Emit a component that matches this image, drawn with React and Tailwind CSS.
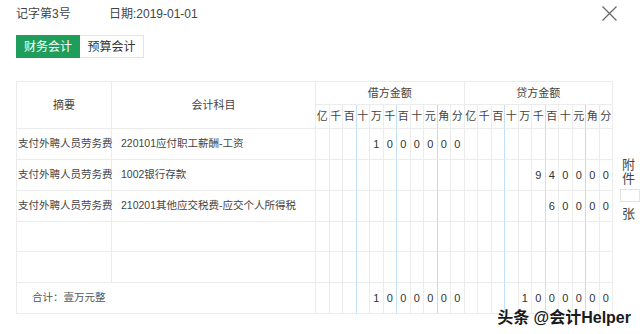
import React from 'react';

const units = ['亿', '千', '百', '十', '万', '千', '百', '十', '元', '角', '分'];

const rows = [
  { memo: '支付外聘人员劳务费', account: '220101应付职工薪酬-工资', debit: '1000000', credit: '' },
  { memo: '支付外聘人员劳务费', account: '1002银行存款', debit: '', credit: '940000' },
  { memo: '支付外聘人员劳务费', account: '210201其他应交税费-应交个人所得税', debit: '', credit: '60000' },
  { memo: '', account: '', debit: '', credit: '' },
  { memo: '', account: '', debit: '', credit: '' },
];

// 金额按位拆开，右对齐到“分”
const toDigits = (s) => {
  const arr = Array(11).fill('');
  s.split('').forEach((c, k) => {
    arr[11 - s.length + k] = c;
  });
  return arr;
};

const lineColor = (i) => {
  if (i === 2 || i === 5) return 'border-r-[#c2e1f6]';
  if (i === 8) return 'border-r-[#f6c9c9]';
  return 'border-r-[#ececec]';
};

const AmountCells = ({ value }) =>
  toDigits(value).map((d, i) => (
    <div
      key={i}
      className={`border-r border-b border-b-[#ececec] ${lineColor(i)} flex items-center justify-center text-[11px] text-[#333]`}
    >
      {d}
    </div>
  ));

const App = () => {
  return (
    <div
      className="relative w-[640px] h-[334px] bg-white overflow-hidden text-[#333]"
      style={{ fontFamily: '"Liberation Sans", "Noto Sans CJK SC", sans-serif' }}
    >
      {/* 顶部 */}
      <div className="flex items-center justify-between h-[27px] pl-4 pr-[23px] text-[12px] text-[#444]">
        <div className="flex items-center">
          <span className="w-[93px]">记字第3号</span>
          <span>日期:2019-01-01</span>
        </div>
        <svg width="15" height="15" viewBox="0 0 15 15" className="text-[#666]">
          <path d="M0.5 0.5 L14.5 14.5 M14.5 0.5 L0.5 14.5" stroke="currentColor" strokeWidth="1.2" fill="none" />
        </svg>
      </div>

      {/* 标签 */}
      <div className="flex pl-4 mt-[8px]">
        <div className="w-[64px] h-[23px] flex items-center justify-center bg-[#1f9d5b] text-white text-[12px]">
          财务会计
        </div>
        <div className="w-[64px] h-[23px] flex items-center justify-center border border-[#e3e3e3] border-l-0 text-[12px] text-[#333]">
          预算会计
        </div>
      </div>

      {/* 凭证表格 */}
      <div className="flex items-start mt-[23px] pl-4">
        <div className="grid w-[600px] grid-cols-[95px_204px_repeat(22,minmax(0,1fr))] grid-rows-[23px_24px_31px_31px_31px_30px_31px_31px] border-l border-t border-[#ececec] text-[#444]">
          <div className="row-span-2 border-r border-b border-[#ececec] flex items-center justify-center text-[11px]">摘要</div>
          <div className="row-span-2 border-r border-b border-[#ececec] flex items-center justify-center text-[11px]">会计科目</div>
          <div className="col-span-11 border-r border-b border-[#ececec] flex items-center justify-center text-[11px]">借方金额</div>
          <div className="col-span-11 border-r border-b border-[#ececec] flex items-center justify-center text-[11px]">贷方金额</div>
          {[...units, ...units].map((u, k) => (
            <div
              key={k}
              className={`border-r border-b border-b-[#ececec] ${lineColor(k % 11)} flex items-center justify-center text-[11px]`}
            >
              {u}
            </div>
          ))}

          {rows.map((r, idx) => (
            <React.Fragment key={idx}>
              <div className="border-r border-b border-[#ececec] flex items-center pl-[1px] whitespace-nowrap text-[10.5px]">{r.memo}</div>
              <div className="border-r border-b border-[#ececec] flex items-center pl-[9px] whitespace-nowrap text-[10.5px]">{r.account}</div>
              <AmountCells value={r.debit} />
              <AmountCells value={r.credit} />
            </React.Fragment>
          ))}

          <div className="col-span-2 border-r border-b border-[#ececec] flex items-center pl-[15px] text-[10.5px] text-[#555]">
            合计：壹万元整
          </div>
          <AmountCells value="1000000" />
          <AmountCells value="1000000" />
        </div>

        {/* 附件 */}
        <div className="ml-[7px] mt-[77px] flex flex-col items-start text-[13px] leading-[14px] text-[#444]">
          <span className="pl-[2px]">附</span>
          <span className="pl-[2px]">件</span>
          <div className="mt-[3px] w-[20px] h-[13px] border border-[#e3e3e3]"></div>
          <span className="pl-[2px] mt-[5px]">张</span>
        </div>
      </div>

      {/* 水印 */}
      <div
        className="absolute right-[9px] bottom-[8px] text-[16px] leading-none text-[#1a1a1a] font-semibold"
        style={{ textShadow: '0 0 2px #fff, 0 0 2px #fff' }}
      >
        头条 @会计Helper
      </div>
    </div>
  );
};

export default App;
